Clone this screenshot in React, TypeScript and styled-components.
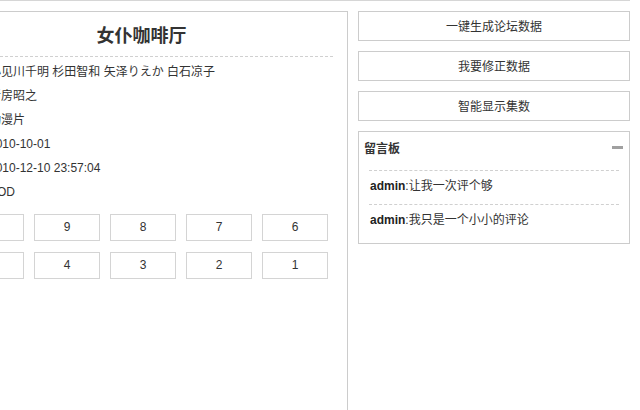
import * as React from "react";
import styled, { createGlobalStyle } from "styled-components";

const GlobalStyle = createGlobalStyle`
  html, body {
    margin: 0;
    padding: 0;
    background: #fff;
    overflow: hidden;
  }
  body {
    font-family: "Liberation Sans", "Noto Sans CJK SC", sans-serif;
    font-size: 12px;
    color: #333;
  }
`;

const TopBar = styled.div`
  width: 630px;
  border-bottom: 1px solid #d6d6d6;
`;

const Layout = styled.div`
  display: flex;
  align-items: flex-start;
  gap: 10px;
  margin-top: 10px;
`;

const DetailPanel = styled.div`
  box-sizing: border-box;
  width: 414px;
  min-height: 400px;
  margin-left: -66px;
  padding: 0 14px 0 15px;
  border: 1px solid #cccccc;
  flex-shrink: 0;
`;

const Title = styled.h2`
  margin: 0;
  height: 44px;
  line-height: 44px;
  text-align: center;
  font-family: "Noto Sans CJK SC", sans-serif;
  font-size: 18px;
  font-weight: bold;
  color: #333;
  border-bottom: 1px dashed #d0d0d0;
`;

const InfoList = styled.dl`
  margin: 3px 0 0;
  padding: 0 0 0 3px;
`;

const InfoRow = styled.div`
  display: flex;
  height: 24px;
  line-height: 24px;
  white-space: nowrap;
`;

const InfoLabel = styled.dt`
  width: 36px;
  margin: 0;
  font-family: "Noto Sans CJK SC", sans-serif;
`;

const InfoValue = styled.dd`
  margin: 0;
`;

const EpisodeGrid = styled.div`
  display: flex;
  flex-wrap: wrap;
  gap: 11px 10px;
  width: 370px;
  margin-top: 10px;
  padding-left: 8px;
`;

const EpisodeLink = styled.a`
  box-sizing: border-box;
  width: 66px;
  height: 27px;
  line-height: 25px;
  text-align: center;
  border: 1px solid #d4d4d4;
  color: #333;
  text-decoration: none;
`;

const SideColumn = styled.div`
  display: flex;
  flex-direction: column;
  gap: 10px;
  width: 272px;
  flex-shrink: 0;
`;

const ActionButton = styled.div`
  box-sizing: border-box;
  height: 30px;
  line-height: 28px;
  text-align: center;
  border: 1px solid #cccccc;
  font-family: "Noto Sans CJK SC", sans-serif;
  color: #333;
`;

const Board = styled.div`
  box-sizing: border-box;
  height: 113px;
  border: 1px solid #cccccc;
`;

const BoardHead = styled.div`
  display: flex;
  align-items: center;
  justify-content: space-between;
  height: 30px;
  padding: 0 6px 0 5px;
`;

const BoardTitle = styled.span`
  font-family: "Noto Sans CJK SC", sans-serif;
  font-weight: bold;
  color: #333;
`;

const Collapse = styled.span`
  display: block;
  width: 11px;
  height: 3px;
  background: #a0a0a0;
`;

const CommentList = styled.ul`
  list-style: none;
  margin: 8px 10px 0;
  padding: 0;
`;

const Comment = styled.li`
  height: 33px;
  line-height: 30px;
  padding-left: 1px;
  border-top: 1px dashed #d0d0d0;
  white-space: nowrap;
`;

const Author = styled.b`
  font-family: "Liberation Sans", sans-serif;
  color: #222;
`;

const info = [
  ["主演：", "小见川千明 杉田智和 矢泽りえか 白石凉子"],
  ["导演：", "新房昭之"],
  ["类型：", "动漫片"],
  ["首播：", "2010-10-01"],
  ["更新：", "2010-12-10 23:57:04"],
  ["来源：", "VOD"],
];

const episodes = [10, 9, 8, 7, 6, 5, 4, 3, 2, 1];

const comments = ["让我一次评个够", "我只是一个小小的评论"];

const App = () => (
  <>
    <GlobalStyle />
    <TopBar />
    <Layout>
      <DetailPanel>
        <Title>女仆咖啡厅</Title>
        <InfoList>
          {info.map(([label, value]) => (
            <InfoRow key={label}>
              <InfoLabel>{label}</InfoLabel>
              <InfoValue>{value}</InfoValue>
            </InfoRow>
          ))}
        </InfoList>
        <EpisodeGrid>
          {episodes.map((n) => (
            <EpisodeLink key={n} href="#">
              {n}
            </EpisodeLink>
          ))}
        </EpisodeGrid>
      </DetailPanel>
      <SideColumn>
        <ActionButton>一键生成论坛数据</ActionButton>
        <ActionButton>我要修正数据</ActionButton>
        <ActionButton>智能显示集数</ActionButton>
        <Board>
          <BoardHead>
            <BoardTitle>留言板</BoardTitle>
            <Collapse />
          </BoardHead>
          <CommentList>
            {comments.map((c) => (
              <Comment key={c}>
                <Author>admin</Author>:{c}
              </Comment>
            ))}
          </CommentList>
        </Board>
      </SideColumn>
    </Layout>
  </>
);

export default App;
